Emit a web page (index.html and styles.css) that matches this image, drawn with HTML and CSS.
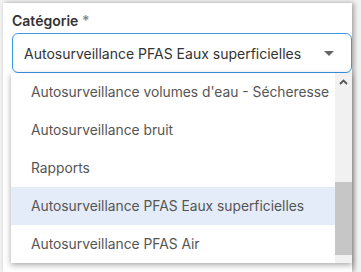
FILE: index.html
```html
<!DOCTYPE html>
<html lang="fr">
<head>
<meta charset="utf-8">
<link rel="stylesheet" href="styles.css">
</head>
<body>
<div class="card">
  <label class="label">Catégorie <span class="req">*</span></label>
  <div class="field">
    <div class="select">
      <span class="value">Autosurveillance PFAS Eaux superficielles</span>
      <span class="caret"></span>
    </div>
    <div class="menu">
      <ul class="options">
        <li class="option">Autosurveillance volumes d'eau - Sécheresse</li>
        <li class="option">Autosurveillance bruit</li>
        <li class="option">Rapports</li>
        <li class="option active">Autosurveillance PFAS Eaux superficielles</li>
        <li class="option">Autosurveillance PFAS Air</li>
      </ul>
      <div class="scrollbar">
        <div class="arrow-up">
          <svg width="9" height="6" viewBox="0 0 9 6"><path d="M1 5 L4.5 1.5 L8 5" fill="none" stroke="#555" stroke-width="1.8"/></svg>
        </div>
        <div class="track"><div class="thumb"></div></div>
        <div class="arrow-down"></div>
      </div>
    </div>
  </div>
</div>
</body>
</html>
```
FILE: styles.css
```css
html, body {
  margin: 0;
  padding: 0;
}
body {
  background: #f3f3f3;
  font-family: Inter, "Liberation Sans", sans-serif;
  width: 361px;
  height: 272px;
  overflow: hidden;
}
.card {
  margin: 3px 0 0 3px;
  width: 349px;
  height: 269px;
  background: #fff;
  box-shadow: 2px 0 5px rgba(0, 0, 0, 0.35);
  padding: 8px 0 0 9px;
  box-sizing: border-box;
}
.label {
  display: block;
  font-size: 14px;
  font-weight: 600;
  line-height: 20px;
  color: #333;
  margin-bottom: 2px;
}
.req {
  color: #888;
}
.field {
  position: relative;
}
.select {
  box-sizing: border-box;
  width: 340px;
  height: 40px;
  border: 1px solid #3d96e8;
  border-radius: 6px;
  display: flex;
  align-items: center;
  padding: 0 17px 0 11px;
  justify-content: space-between;
  font-size: 14px;
  color: #333;
}
.caret {
  width: 0;
  height: 0;
  border-left: 5px solid transparent;
  border-right: 5px solid transparent;
  border-top: 5px solid #666;
}
.menu {
  position: absolute;
  top: 40px;
  left: -1px;
  width: 341px;
  height: 190px;
  background: #fff;
  display: flex;
  box-shadow: 0 2px 6px rgba(0, 0, 0, 0.35);
}
.options {
  list-style: none;
  margin: 0;
  padding: 0;
  flex: 1;
  min-width: 0;
  overflow: hidden;
}
.option {
  height: 38px;
  line-height: 38px;
  padding-left: 20px;
  font-size: 13.8px;
  color: #555;
  white-space: nowrap;
}
.option.active {
  background: #e3ecf8;
}
.scrollbar {
  width: 17px;
  flex: none;
  background: #f1f1f1;
  display: flex;
  flex-direction: column;
}
.arrow-up {
  height: 17px;
  display: flex;
  align-items: center;
  justify-content: center;
}
.track {
  flex: 1;
  display: flex;
  flex-direction: column;
  justify-content: flex-end;
}
.thumb {
  height: 73px;
  background: #c6c6c6;
}
.arrow-down {
  height: 8px;
}
```
